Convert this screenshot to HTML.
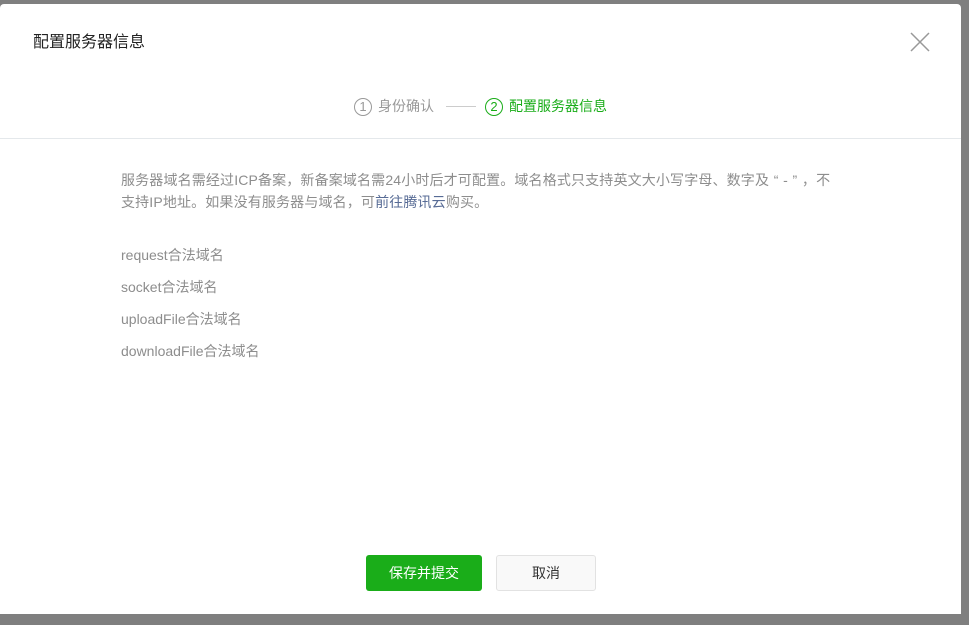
<!DOCTYPE html>
<html><head><meta charset="utf-8"><style>
body{margin:0;width:969px;height:625px;background:#7f7f7f;font-family:"Liberation Sans","Noto Sans CJK SC",sans-serif;position:relative;overflow:hidden}
.d{position:absolute;left:0;top:4px;width:961px;height:610px;background:#fff;border-radius:4px 4px 0 0}
.t{position:absolute;left:33px;top:24px;font-size:16px;color:#222}
.x{position:absolute;left:908px;top:26px;width:24px;height:24px}
.s{position:absolute;top:92px;font-size:14px;line-height:20px}
.c{display:inline-block;width:16px;height:16px;border:1px solid;border-radius:50%;text-align:center;line-height:16px;font-size:13px;margin-right:6px;vertical-align:0px}
.hr{position:absolute;left:0;top:134px;width:961px;height:1px;background:#e4e8eb}
.p{position:absolute;left:121px;top:165px;width:760px;font-size:14px;line-height:22px;color:#8d8d8d;white-space:nowrap;letter-spacing:0.15px}
.p a{color:#576b95}
.q{display:inline-block;width:14px;text-align:center}
.i{position:absolute;left:121px;font-size:14px;color:#8d8d8d}
.b{position:absolute;top:551px;height:36px;line-height:36px;text-align:center;font-size:14px;border-radius:3px;box-sizing:border-box}
</style></head><body>
<div class="d">
<div class="t">配置服务器信息</div>
<svg class="x" viewBox="0 0 24 24"><path d="M3 3L21 21M21 3L3 21" stroke="#999" stroke-width="1.5" fill="none"/></svg>
<div class="s" style="left:354px;color:#999"><span class="c">1</span>身份确认</div>
<div style="position:absolute;left:446px;top:102px;width:30px;height:1px;background:#ccc"></div>
<div class="s" style="left:485px;color:#1aad19"><span class="c">2</span>配置服务器信息</div>
<div class="hr"></div>
<div class="p">服务器域名需经过ICP备案，新备案域名需24小时后才可配置。域名格式只支持英文大小写字母、数字及<span class="q">“</span>-<span class="q">”</span>，不<br>支持IP地址。如果没有服务器与域名，可<a>前往腾讯云</a>购买。</div>
<div class="i" style="top:241px">request合法域名</div>
<div class="i" style="top:273px">socket合法域名</div>
<div class="i" style="top:305px">uploadFile合法域名</div>
<div class="i" style="top:337px">downloadFile合法域名</div>
<div class="b" style="left:366px;width:116px;background:#1aad19;color:#fff">保存并提交</div>
<div class="b" style="left:496px;width:100px;background:#f9f9f9;border:1px solid #e2e2e2;color:#333;line-height:34px">取消</div>
</div>
</body></html>
